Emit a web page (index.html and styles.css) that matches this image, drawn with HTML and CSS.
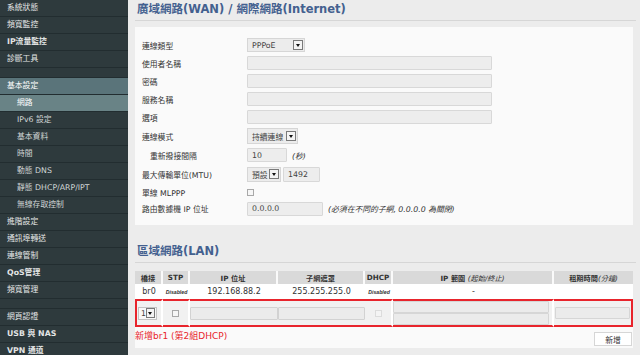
FILE: index.html
```html
<!DOCTYPE html>
<html lang="zh-Hant">
<head>
    <meta charset="UTF-8">
    <meta name="viewport" content="width=device-width, initial-scale=1.0">
    <title>基本設定 - 網路</title>
    <link rel="stylesheet" href="styles.css">
</head>
<body>
    <div class="layout">

        <!-- 側邊選單 -->
        <nav class="sidebar">
            <ul class="menu">
                <li>系統狀態</li>
                <li>頻寬監控</li>
                <li class="bold">IP流量監控</li>
                <li>診斷工具</li>
                <li class="spacer"></li>
                <li class="group-open">基本設定</li>
                <li class="sub active">網路</li>
                <li class="sub">IPv6 設定</li>
                <li class="sub">基本資料</li>
                <li class="sub">時間</li>
                <li class="sub">動態 DNS</li>
                <li class="sub">靜態 DHCP/ARP/IPT</li>
                <li class="sub">無線存取控制</li>
                <li>進階設定</li>
                <li>通訊埠轉送</li>
                <li>連線管制</li>
                <li class="bold">QoS管理</li>
                <li>頻寬管理</li>
                <li class="spacer"></li>
                <li>網頁認證</li>
                <li class="bold">USB 與 NAS</li>
                <li class="bold">VPN 通道</li>
            </ul>
        </nav>

        <main class="content">

            <!-- WAN 設定 -->
            <h2 class="section-title">廣域網路(WAN) / 網際網路(Internet)</h2>
            <div class="panel wan-panel">
                <div class="form-row">
                    <label class="form-label">連線類型</label>
                    <div class="form-field">
                        <span class="select select-type">PPPoE<span class="select-btn"></span></span>
                    </div>
                </div>
                <div class="form-row">
                    <label class="form-label">使用者名稱</label>
                    <div class="form-field"><span class="input input-long"></span></div>
                </div>
                <div class="form-row">
                    <label class="form-label">密碼</label>
                    <div class="form-field"><span class="input input-long"></span></div>
                </div>
                <div class="form-row">
                    <label class="form-label">服務名稱</label>
                    <div class="form-field"><span class="input input-long"></span></div>
                </div>
                <div class="form-row">
                    <label class="form-label">選項</label>
                    <div class="form-field"><span class="input input-long"></span></div>
                </div>
                <div class="form-row row-20">
                    <label class="form-label">連線模式</label>
                    <div class="form-field">
                        <span class="select select-mode">持續連線<span class="select-btn"></span></span>
                    </div>
                </div>
                <div class="form-row">
                    <label class="form-label indent">重新撥接間隔</label>
                    <div class="form-field">
                        <span class="input input-short">10</span>
                        <span class="hint">(秒)</span>
                    </div>
                </div>
                <div class="form-row row-20">
                    <label class="form-label">最大傳輸單位(MTU)</label>
                    <div class="form-field">
                        <span class="select select-mtu">預設<span class="select-btn"></span></span>
                        <span class="input input-mtu">1492</span>
                    </div>
                </div>
                <div class="form-row row-17">
                    <label class="form-label">單線 MLPPP</label>
                    <div class="form-field"><span class="checkbox"></span></div>
                </div>
                <div class="form-row row-15">
                    <label class="form-label">路由數據機 IP 位址</label>
                    <div class="form-field">
                        <span class="input input-ip">0.0.0.0</span>
                        <span class="hint">(必須在不同的子網, 0.0.0.0 為關閉)</span>
                    </div>
                </div>
            </div>

            <!-- LAN 設定 -->
            <h2 class="section-title lan-title">區域網路(LAN)</h2>
            <div class="panel lan-panel">
                <table class="lan-table">
                    <thead>
                        <tr>
                            <th class="col-bridge">橋接</th>
                            <th class="col-stp">STP</th>
                            <th class="col-ip">IP 位址</th>
                            <th class="col-mask">子網遮罩</th>
                            <th class="col-dhcp">DHCP</th>
                            <th class="col-range">IP 範圍 <i>(起始/終止)</i></th>
                            <th class="col-lease">租期時間<i>(分鐘)</i></th>
                        </tr>
                    </thead>
                    <tbody>
                        <tr class="lan-row">
                            <td>br0</td>
                            <td><span class="tag">Disabled</span></td>
                            <td>192.168.88.2</td>
                            <td>255.255.255.0</td>
                            <td><span class="tag">Disabled</span></td>
                            <td>-</td>
                            <td></td>
                        </tr>
                        <tr class="new-row">
                            <td><span class="select select-bridge">1<span class="select-btn"></span></span></td>
                            <td><span class="checkbox"></span></td>
                            <td class="join"><span class="input input-cell"></span></td>
                            <td class="join"><span class="input input-cell"></span></td>
                            <td><span class="checkbox faded"></span></td>
                            <td class="range">
                                <span class="input input-range"></span>
                                <span class="input input-range"></span>
                            </td>
                            <td><span class="input input-lease"></span></td>
                        </tr>
                    </tbody>
                </table>
                <div class="lan-footer">
                    <span class="add-note">新增br1 (第2組DHCP)</span>
                    <button class="btn">新增</button>
                </div>
            </div>

        </main>
    </div>
</body>
</html>
```

FILE: styles.css
```css
/* 基本樣式 */
* {
    box-sizing: border-box;
}

body {
    margin: 0;
    height: 355px;
    overflow: hidden;
    background-color: #ececec;
    font-family: "DejaVu Sans", "Noto Sans CJK TC", sans-serif;
    font-size: 7.8px;
    color: #333;
}

.layout {
    display: flex;
    height: 100%;
}

/* 側邊選單 */
.sidebar {
    width: 128px;
    flex-shrink: 0;
    background-color: #2e3a3d;
}

.menu {
    list-style: none;
    margin: 0;
    padding: 0;
}

.menu li {
    height: 17px;
    line-height: 16px;
    padding-left: 7px;
    border-bottom: 1px solid #222d30;
    color: #e4e6e6;
    white-space: nowrap;
}

.menu li.spacer {
    height: 10px;
}

.menu li.bold {
    font-weight: bold;
}

.menu li.sub {
    padding-left: 17px;
    color: #d0d5d5;
}

.menu li.group-open {
    background-color: #5a747a;
    color: #fff;
}

.menu li.active {
    background-color: #698386;
    color: #fff;
}

/* 內容區 */
.content {
    flex: 1;
    padding: 0 4px 0 7px;
}

.section-title {
    margin: 0;
    padding: 2px 0 3px 2px;
    line-height: 15px;
    font-size: 11.5px;
    font-weight: bold;
    color: #43608f;
    border-bottom: 1px solid #d6d6d6;
}

.lan-title {
    margin-top: 17px;
}

.panel {
    background-color: #fafafa;
    margin: 6px 3px 0 0;
}

.wan-panel {
    padding: 9px 0 9px 7px;
}

.form-row {
    display: flex;
    align-items: center;
    height: 18px;
}

.row-20 {
    height: 20px;
}

.row-17 {
    height: 17px;
}

.row-15 {
    height: 15px;
}

.form-label {
    width: 105px;
    flex-shrink: 0;
    white-space: nowrap;
}

.form-label.indent {
    padding-left: 8px;
}

.form-field {
    display: flex;
    align-items: center;
    gap: 2px;
}

.hint {
    margin-left: 3px;
    font-style: italic;
    white-space: nowrap;
}

/* 輸入欄位 */
.input {
    display: flex;
    align-items: center;
    height: 14px;
    padding-left: 4px;
    background-color: #ededed;
    border: 1px solid #d8d8d8;
    border-radius: 1px;
    color: #444;
}

.input-long {
    width: 245px;
}

.input-short {
    width: 40px;
}

.input-mtu {
    width: 37px;
    height: 15px;
}

.input-ip {
    width: 76px;
}

.select {
    display: flex;
    align-items: center;
    justify-content: space-between;
    height: 14px;
    padding: 0 1px 0 4px;
    background-color: #ececec;
    border: 1px solid #d6d6d6;
    color: #444;
}

.select-type {
    width: 58px;
}

.select-mode {
    width: 51px;
    height: 16px;
}

.select-mtu {
    width: 34px;
    height: 15px;
}

.select-btn {
    display: flex;
    align-items: center;
    justify-content: center;
    width: 10px;
    height: 10px;
    background-color: #f4f4f4;
    border: 1px solid #7a7a7a;
}

.select-btn::after {
    content: "";
    border-left: 2px solid transparent;
    border-right: 2px solid transparent;
    border-top: 3px solid #111;
}

.checkbox {
    display: block;
    width: 7px;
    height: 7px;
    background-color: #f6f6f6;
    border: 1px solid #a8a8a8;
}

.checkbox.faded {
    border-color: #dcdcdc;
    background-color: #f4f4f4;
}

/* LAN 表格 */
.lan-panel {
    margin-top: 8px;
}

.lan-table {
    width: 100%;
    table-layout: fixed;
    border-collapse: separate;
    border-spacing: 0;
}

.lan-table th {
    height: 13px;
    padding: 0;
    background-color: #d9d9d9;
    border-right: 2px solid #fafafa;
    font-size: 7.2px;
    font-weight: bold;
    text-align: center;
    white-space: nowrap;
}

.lan-table th i {
    font-weight: normal;
}

.lan-table th:last-child {
    border-right: none;
}

.col-bridge { width: 28px; }
.col-stp { width: 27px; }
.col-ip { width: 88px; }
.col-mask { width: 87px; }
.col-dhcp { width: 28px; }
.col-range { width: 161px; }
.col-lease { width: 79px; }

.lan-row td {
    height: 15px;
    padding: 0;
    background-color: #fff;
    text-align: center;
    font-size: 8px;
    white-space: nowrap;
}

.tag {
    font-family: "Liberation Sans", sans-serif;
    font-size: 5.2px;
    font-style: italic;
    font-weight: bold;
}

.new-row td {
    height: 28px;
    padding: 0 1px;
    background-color: #f1f1f1;
    border-top: 2px solid #e8242c;
    border-bottom: 2px solid #e8242c;
    border-right: 2px solid #fff;
    vertical-align: middle;
}

.new-row td:first-child {
    border-left: 2px solid #e8242c;
}

.new-row td:last-child {
    border-right: 2px solid #e8242c;
}

.new-row td.join {
    padding: 0;
    border-right: none;
}

.new-row .checkbox {
    margin: 0 auto;
}

.select-bridge {
    width: 19px;
    height: 13px;
    padding-left: 2px;
    background-color: #f8f8f8;
    border-color: #c4c4c4;
}

.input-cell {
    width: 100%;
    height: 13px;
    background-color: #ebebeb;
    border-color: #d2d2d2;
}

.new-row td.range {
    padding: 0 3px 0 0;
}

.input-range {
    width: 100%;
    height: 12px;
    background-color: #ebebeb;
    border-color: #d6d6d6;
}

.input-lease {
    width: 100%;
    height: 12px;
    background-color: #ebebeb;
    border-color: #d6d6d6;
}

.lan-footer {
    display: flex;
    justify-content: space-between;
    align-items: flex-start;
    height: 21px;
    padding: 3px 1px 0 0;
}

.add-note {
    line-height: 13px;
    font-size: 9px;
    color: #e8242c;
}

.btn {
    width: 38px;
    height: 14px;
    margin-top: 2px;
    padding: 0;
    background-color: #fff;
    border: 1px solid #d6d6d6;
    font-family: inherit;
    font-size: 7.8px;
    color: #333;
}
```
